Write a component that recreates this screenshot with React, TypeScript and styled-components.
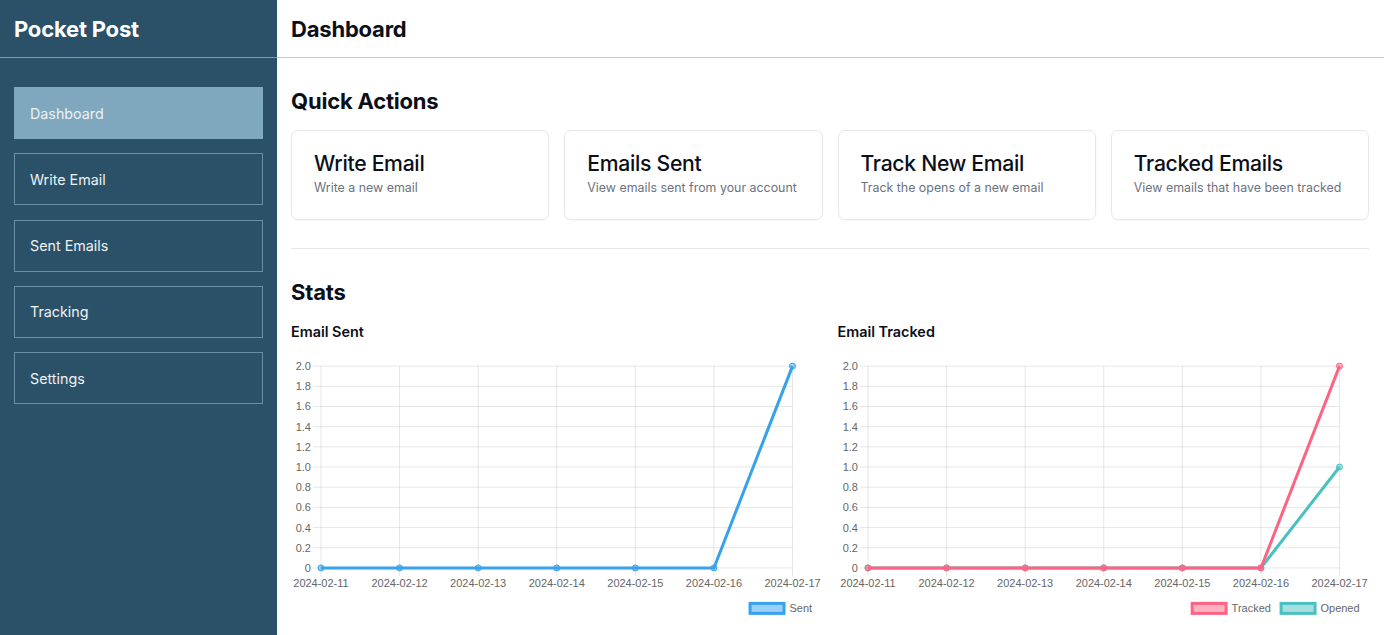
import React from "react";
import styled, { createGlobalStyle } from "styled-components";

const GlobalStyle = createGlobalStyle`
  * { box-sizing: border-box; }
  html, body { margin: 0; padding: 0; background: #ffffff; }
  body { font-family: Inter, "Noto Sans", sans-serif; color: #0b0f1a; }
`;

const Layout = styled.div`
  display: flex;
  height: 100vh;
  min-height: 635px;
`;

const Sidebar = styled.aside`
  width: 277px;
  flex: 0 0 277px;
  background: #2b5169;
  display: flex;
  flex-direction: column;
`;

const Header = styled.div`
  height: 58px;
  display: flex;
  align-items: center;
  padding: 0 14px;
  border-bottom: 1px solid rgba(180, 180, 180, 0.7);
`;

const Brand = styled.h1`
  margin: 0;
  font-size: 22px;
  font-weight: 700;
  color: #ffffff;
  letter-spacing: -0.2px;
`;

const PageTitle = styled.h1`
  margin: 0;
  font-size: 22px;
  font-weight: 700;
  color: #0b0f1a;
  letter-spacing: -0.2px;
`;

const Nav = styled.nav`
  display: flex;
  flex-direction: column;
  gap: 14.33px;
  padding: 29px 14px 0;
`;

const NavItem = styled.a<{ $active?: boolean }>`
  display: flex;
  align-items: center;
  height: 52px;
  padding-left: 15px;
  font-size: 14.3px;
  color: #edf2f5;
  text-decoration: none;
  background: ${(p) => (p.$active ? "#7fa7bd" : "transparent")};
  border: 1px solid ${(p) => (p.$active ? "#7fa7bd" : "#6a8ea5")};
`;

const Main = styled.main`
  flex: 1;
  display: flex;
  flex-direction: column;
  min-width: 0;
`;

const Content = styled.div`
  padding: 29px 15px 0 14px;
  display: flex;
  flex-direction: column;
`;

const SectionTitle = styled.h2`
  margin: 0;
  font-size: 22px;
  line-height: 28px;
  font-weight: 700;
  color: #0b0f1a;
  letter-spacing: -0.2px;
`;

const CardGrid = styled.div`
  display: grid;
  grid-template-columns: repeat(4, 1fr);
  gap: 15px;
  margin-top: 15px;
`;

const Card = styled.div`
  height: 90px;
  border: 1px solid #e4e7ec;
  border-radius: 7px;
  padding: 18px 22px 0;
  box-shadow: 0 1px 2px rgba(0, 0, 0, 0.03);
`;

const CardTitle = styled.div`
  font-size: 21.2px;
  line-height: 28px;
  font-weight: 500;
  color: #0b0f1a;
  letter-spacing: -0.3px;
`;

const CardText = styled.div`
  margin-top: 2px;
  font-size: 12.4px;
  line-height: 18px;
  color: #6b7280;
  white-space: nowrap;
`;

const Divider = styled.hr`
  border: none;
  border-top: 1px solid #e5e7eb;
  margin: 28px 0 29px;
`;

const ChartGrid = styled.div`
  display: grid;
  grid-template-columns: 1fr 1fr;
  gap: 15px;
  margin-top: 16px;
`;

const ChartBox = styled.div`
  display: flex;
  flex-direction: column;
`;

const ChartTitle = styled.h3`
  margin: 0 0 10px;
  font-size: 14.4px;
  line-height: 20px;
  font-weight: 600;
  color: #0b0f1a;
`;

const ChartSvg = styled.svg`
  display: block;
  width: 100%;
  height: 270px;
  overflow: visible;
  font-family: "Liberation Sans", Arial, sans-serif;
`;

type Series = { label: string; data: number[]; color: string; fill: string };

const labels = [
  "2024-02-11",
  "2024-02-12",
  "2024-02-13",
  "2024-02-14",
  "2024-02-15",
  "2024-02-16",
  "2024-02-17",
];

const X0 = 30;
const X1 = 502;
const Y0 = 14;
const Y1 = 216;
const xAt = (i: number) => X0 + ((X1 - X0) * i) / 6;
const yAt = (v: number) => Y1 - ((Y1 - Y0) * v) / 2;

type LegendItem = { x: number; series: Series };

const LineChart: React.FC<{ series: Series[]; legend: LegendItem[] }> = ({
  series,
  legend,
}) => {
  const ticks = [0, 0.2, 0.4, 0.6, 0.8, 1.0, 1.2, 1.4, 1.6, 1.8, 2.0];
  return (
    <ChartSvg viewBox="0 0 532 270">
      {ticks.map((t) => (
        <g key={t}>
          <line
            x1={X0 - 8}
            x2={X1}
            y1={yAt(t)}
            y2={yAt(t)}
            stroke="rgba(0,0,0,0.1)"
            strokeWidth={1}
          />
          <text
            x={X0 - 10}
            y={yAt(t) + 4}
            textAnchor="end"
            fontSize="11"
            fill="#666"
          >
            {t === 0 ? "0" : t.toFixed(1)}
          </text>
        </g>
      ))}
      {labels.map((l, i) => (
        <g key={l}>
          <line
            x1={xAt(i)}
            x2={xAt(i)}
            y1={Y0}
            y2={Y1 + 8}
            stroke="rgba(0,0,0,0.1)"
            strokeWidth={1}
          />
          <text
            x={xAt(i)}
            y={235}
            textAnchor="middle"
            fontSize="11"
            fill="#666"
          >
            {l}
          </text>
        </g>
      ))}
      {[...series].reverse().map((s) => (
        <g key={s.label}>
          <polyline
            points={s.data.map((v, i) => `${xAt(i)},${yAt(v)}`).join(" ")}
            fill="none"
            stroke={s.color}
            strokeWidth={3}
            strokeLinejoin="round"
          />
          {s.data.map((v, i) => (
            <circle
              key={i}
              cx={xAt(i)}
              cy={yAt(v)}
              r={3}
              fill={s.fill}
              stroke={s.color}
              strokeWidth={1}
            />
          ))}
        </g>
      ))}
      {legend.map((it) => (
        <g key={it.series.label}>
          <rect
            x={it.x + 1.5}
            y={251.5}
            width={34}
            height={10}
            fill={it.series.fill}
            stroke={it.series.color}
            strokeWidth={3}
          />
          <text x={it.x + 41} y={260} fontSize="11" fill="#666">
            {it.series.label}
          </text>
        </g>
      ))}
    </ChartSvg>
  );
};

const blue: Series = {
  label: "Sent",
  data: [0, 0, 0, 0, 0, 0, 2],
  color: "rgb(54,162,235)",
  fill: "rgba(54,162,235,0.5)",
};
const red: Series = {
  label: "Tracked",
  data: [0, 0, 0, 0, 0, 0, 2],
  color: "rgb(255,99,132)",
  fill: "rgba(255,99,132,0.5)",
};
const teal: Series = {
  label: "Opened",
  data: [0, 0, 0, 0, 0, 0, 1],
  color: "rgb(75,192,192)",
  fill: "rgba(75,192,192,0.5)",
};

const navItems = ["Dashboard", "Write Email", "Sent Emails", "Tracking", "Settings"];

const actions = [
  { title: "Write Email", text: "Write a new email" },
  { title: "Emails Sent", text: "View emails sent from your account" },
  { title: "Track New Email", text: "Track the opens of a new email" },
  { title: "Tracked Emails", text: "View emails that have been tracked" },
];

export default function App() {
  return (
    <>
      <GlobalStyle />
      <Layout>
        <Sidebar>
          <Header>
            <Brand>Pocket Post</Brand>
          </Header>
          <Nav>
            {navItems.map((n, i) => (
              <NavItem key={n} $active={i === 0}>
                {n}
              </NavItem>
            ))}
          </Nav>
        </Sidebar>
        <Main>
          <Header>
            <PageTitle>Dashboard</PageTitle>
          </Header>
          <Content>
            <SectionTitle>Quick Actions</SectionTitle>
            <CardGrid>
              {actions.map((a) => (
                <Card key={a.title}>
                  <CardTitle>{a.title}</CardTitle>
                  <CardText>{a.text}</CardText>
                </Card>
              ))}
            </CardGrid>
            <Divider />
            <SectionTitle>Stats</SectionTitle>
            <ChartGrid>
              <ChartBox>
                <ChartTitle>Email Sent</ChartTitle>
                <LineChart series={[blue]} legend={[{ x: 458, series: blue }]} />
              </ChartBox>
              <ChartBox>
                <ChartTitle>Email Tracked</ChartTitle>
                <LineChart
                  series={[red, teal]}
                  legend={[
                    { x: 353, series: red },
                    { x: 442, series: teal },
                  ]}
                />
              </ChartBox>
            </ChartGrid>
          </Content>
        </Main>
      </Layout>
    </>
  );
}
